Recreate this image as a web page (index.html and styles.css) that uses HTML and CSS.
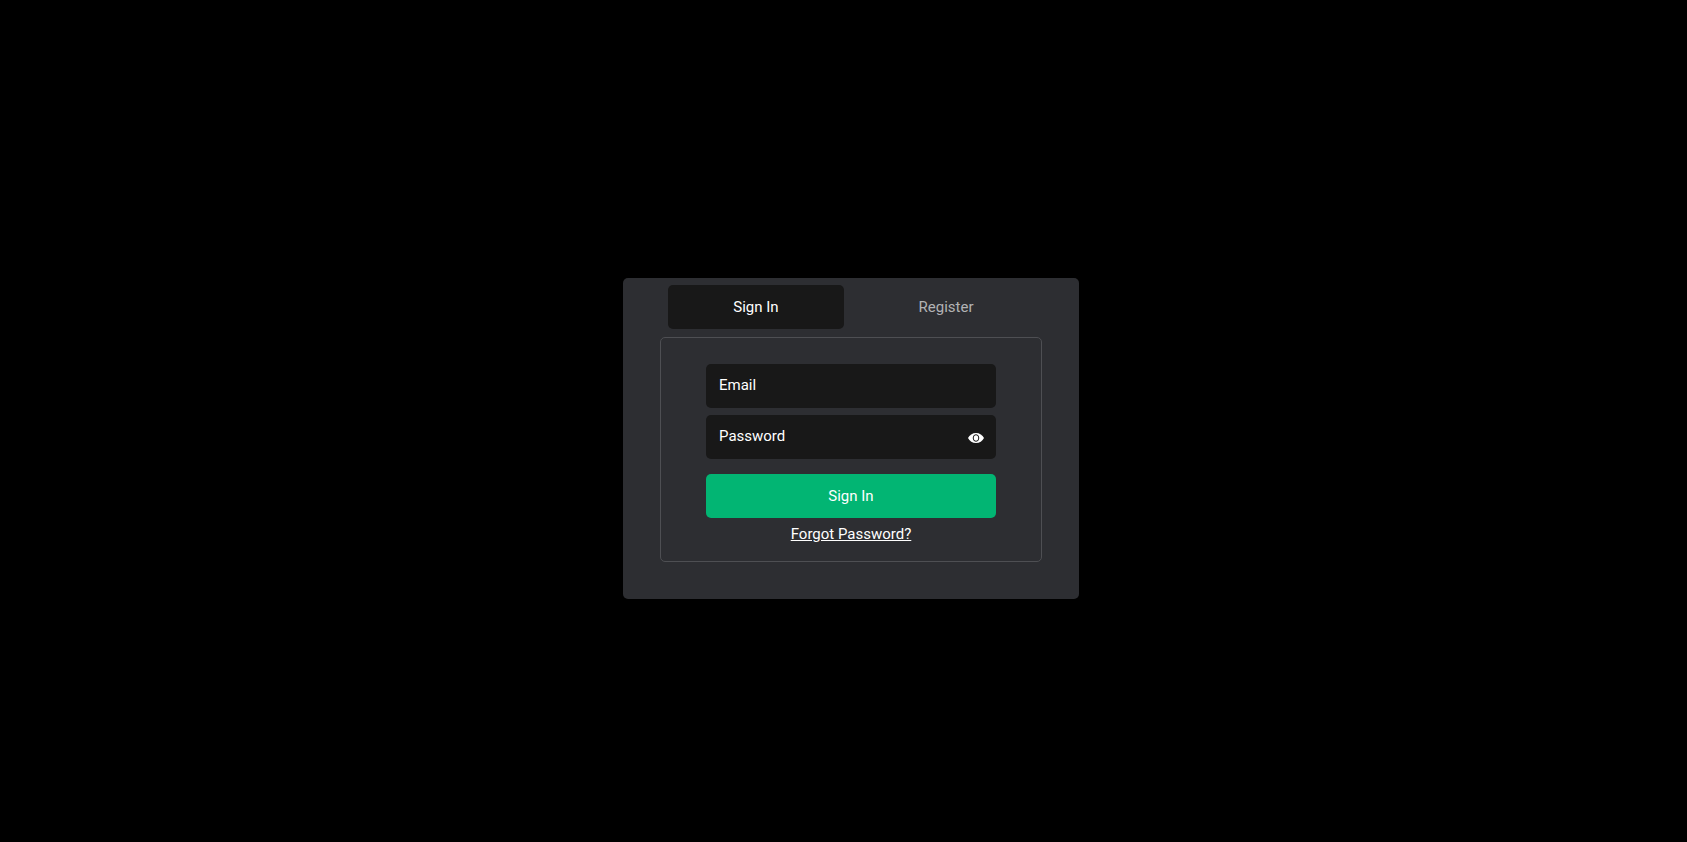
FILE: index.html
```html
<!DOCTYPE html>
<html lang="en">
<head>
  <meta charset="UTF-8">
  <meta name="viewport" content="width=device-width, initial-scale=1">
  <title>Sign In</title>
  <link rel="stylesheet" href="styles.css">
</head>
<body>
  <main class="card">
    <div class="tabs">
      <button type="button" class="tab active">Sign In</button>
      <button type="button" class="tab">Register</button>
    </div>

    <form class="panel">
      <input class="field" type="email" name="email" placeholder="Email" aria-label="Email">
      <div class="password">
        <input class="field" id="password" type="password" name="password" placeholder="Password" aria-label="Password">
        <button type="button" class="toggle" aria-label="Show password" onclick="togglePassword()">
          <svg viewBox="0 0 16 10" width="16" height="10">
            <path fill="#fff" d="M8 0C4.500 0 1.500 2 0 5c1.500 3 4.500 5 8 5s6.500-2 8-5c-1.500-3-4.500-5-8-5z"/>
            <ellipse cx="8" cy="5" rx="2.800" ry="3.300" fill="none" stroke="#181818" stroke-width="1"/>
          </svg>
        </button>
      </div>
      <button type="submit" class="submit">Sign In</button>
      <a class="forgot" href="#">Forgot Password?</a>
    </form>
  </main>

  <script>
    function togglePassword() {
      const input = document.getElementById("password");
      input.type = input.type === "password" ? "text" : "password";
    }
  </script>
</body>
</html>
```

FILE: styles.css
```css
* {
  box-sizing: border-box;
}

body {
  margin: 0;
  min-height: 100vh;
  padding: 35px 0 0 15px;
  display: flex;
  align-items: center;
  justify-content: center;
  background-color: #000;
  color: #fff;
  font-family: Roboto, "Liberation Sans", sans-serif;
  font-size: 15px;
  line-height: 20px;
}

button,
input {
  font: inherit;
  color: inherit;
  border: none;
}

button {
  padding: 0;
  cursor: pointer;
}

.card {
  width: 100%;
  max-width: 456px;
  padding: 7px 37px 37px;
  background-color: #2d2e32;
  border-radius: 5px;
}

.tabs {
  display: flex;
  gap: 14px;
  padding: 0 8px;
  margin-bottom: 8px;
}

.tab {
  flex: 1;
  height: 44px;
  background: none;
  border-radius: 5px;
  color: #b2b3b5;
}

.tab.active {
  background-color: #181818;
  color: #fff;
}

.panel {
  display: flex;
  flex-direction: column;
  padding: 26px 45px 17px;
  border: 1px solid #4e4f53;
  border-radius: 5px;
}

.field {
  width: 100%;
  height: 44px;
  padding: 0 44px 2px 13px;
  background-color: #181818;
  border-radius: 5px;
  outline: none;
}

.field::placeholder {
  color: #fff;
  opacity: 1;
}

.password {
  position: relative;
  margin: 7px 0 15px;
}

.toggle {
  position: absolute;
  top: 13px;
  right: 10px;
  width: 20px;
  height: 20px;
  display: flex;
  align-items: center;
  justify-content: center;
  background: none;
}

.submit {
  height: 44px;
  background-color: #02b573;
  border-radius: 5px;
}

.forgot {
  align-self: center;
  margin-top: 6px;
  color: #fff;
}
```
